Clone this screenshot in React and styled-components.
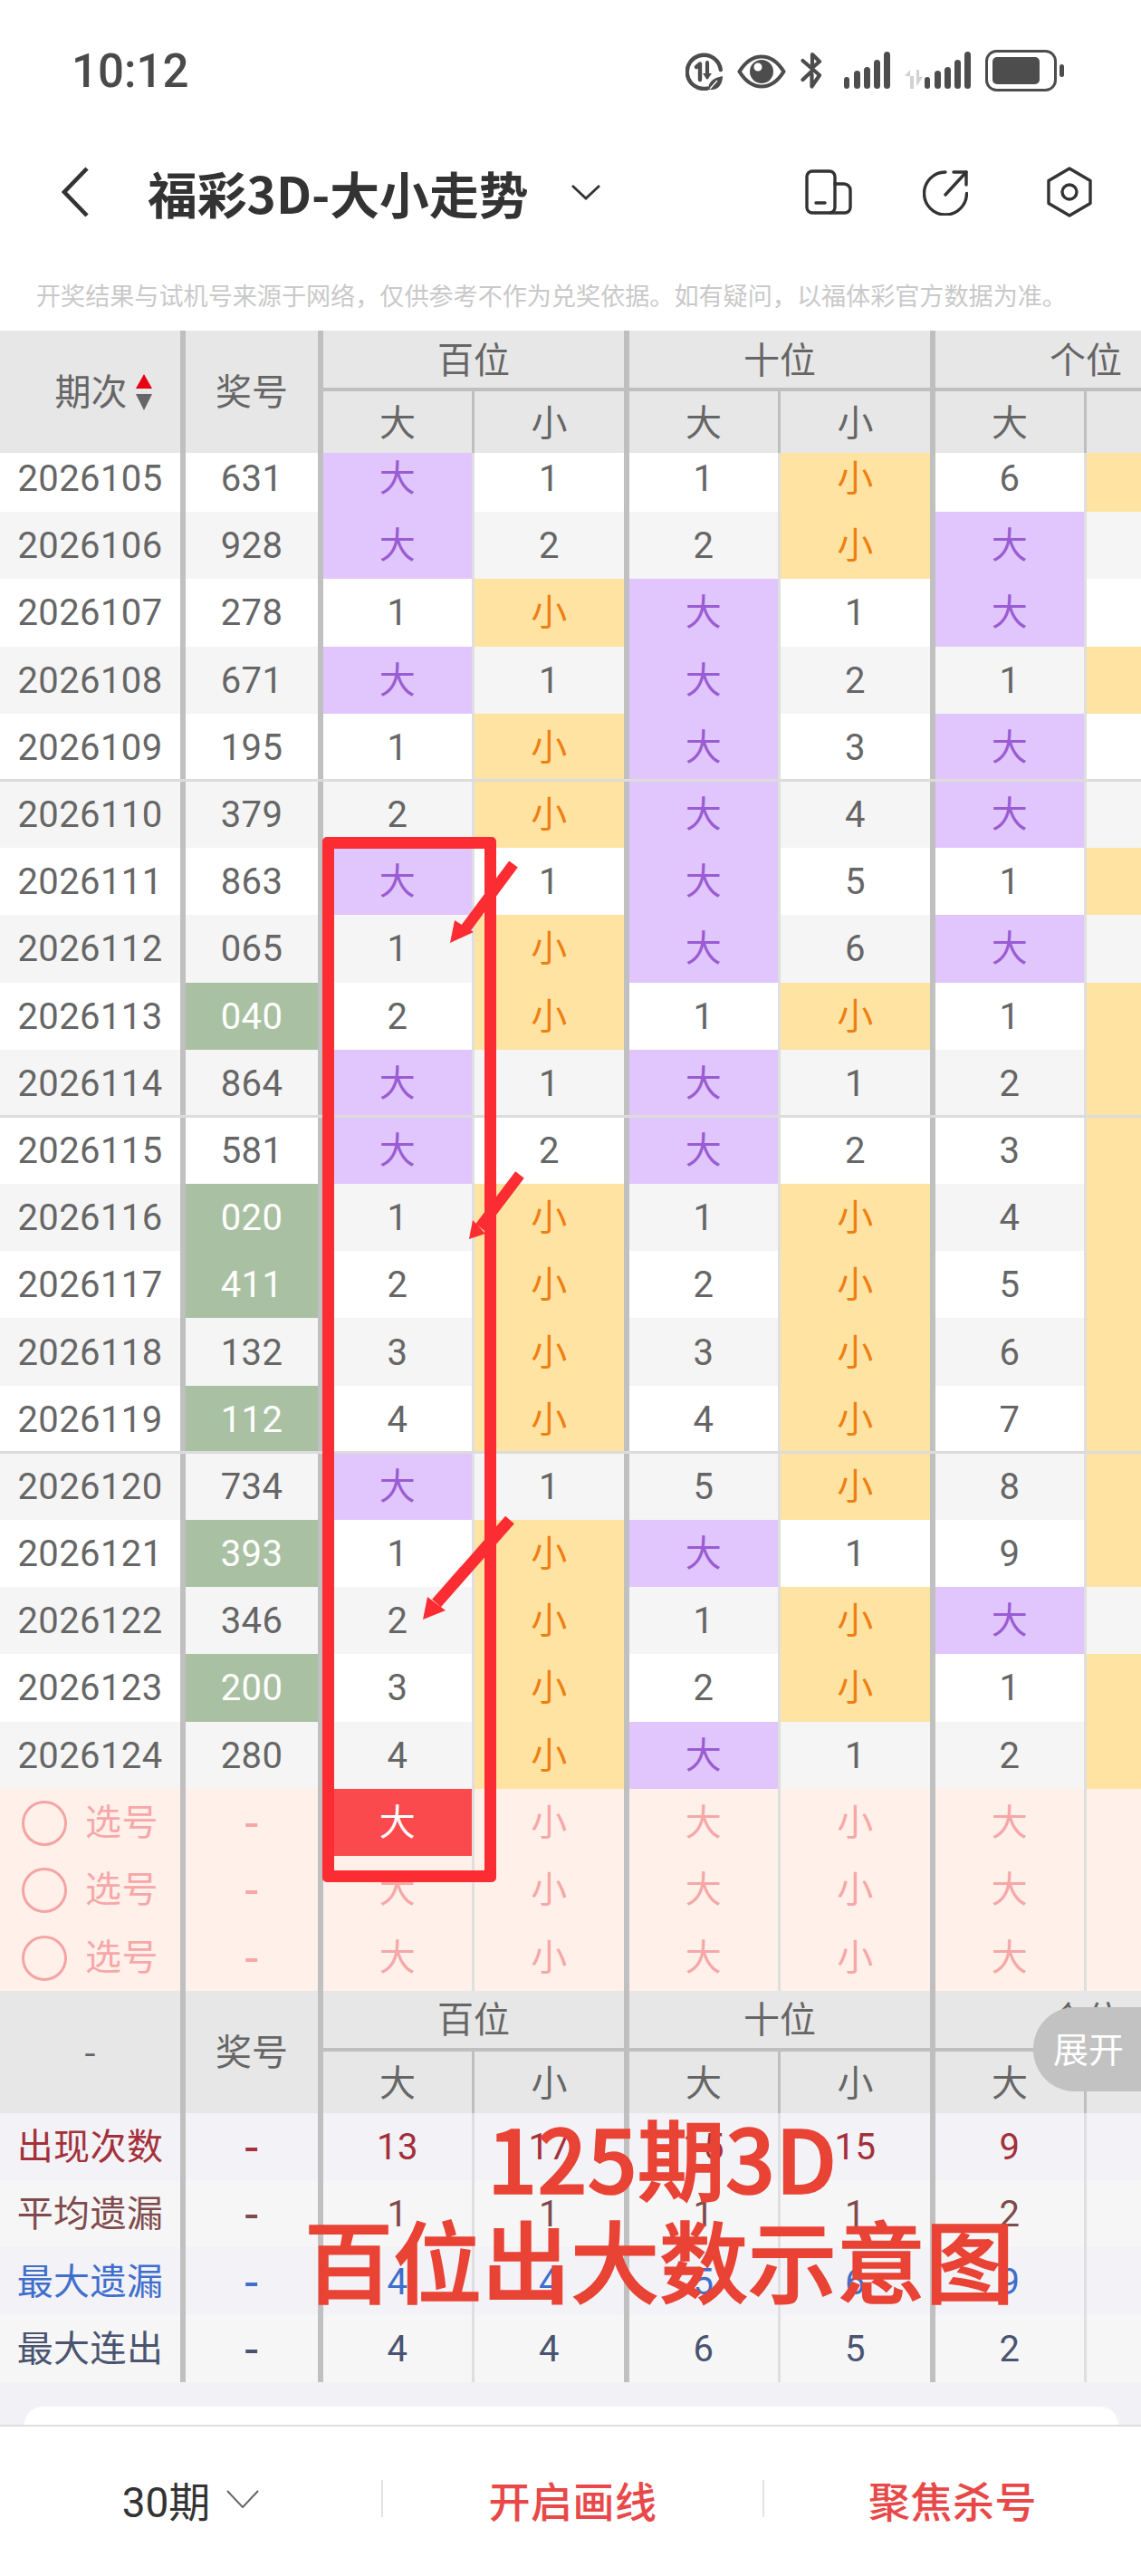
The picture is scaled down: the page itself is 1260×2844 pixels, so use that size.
import React from 'react';
import styled, { createGlobalStyle, css } from 'styled-components';

const Global = createGlobalStyle`
  html, body { margin: 0; padding: 0; background: #fff; }
  * { box-sizing: border-box; }
`;

const FONT = `Roboto, "Noto Sans CJK SC", sans-serif`;
const CJK = `"Noto Sans CJK SC", Roboto, sans-serif`;

const gridColumns = css`
  display: grid;
  grid-template-columns: 205px 152px 167px 171px 167px 171px 167px 171px;
  width: 1371px;
`;

const Page = styled.div`
  position: relative;
  width: 1260px;
  height: 2844px;
  overflow: hidden;
  background: #f2f2f6;
  font-family: ${FONT};
  display: flex;
  flex-direction: column;
`;

const Chrome = styled.header`
  background: #fff;
  height: 365px;
  display: flex;
  flex-direction: column;
  flex: none;
`;

const StatusBar = styled.div`
  height: 152px;
  flex: none;
  display: flex;
  justify-content: space-between;
  align-items: flex-start;
  padding: 56px 85px 0 79px;
`;

const Clock = styled.div`
  font-size: 51px;
  line-height: 46px;
  font-weight: 500;
  color: #4a4a4a;
`;

const StatusIcons = styled.div`
  display: flex;
  align-items: flex-start;
  gap: 16px;
  color: #4d4d4d;
  & > svg:nth-child(3) { margin-right: 7px; }
`;

const NavBar = styled.div`
  height: 120px;
  flex: none;
  display: flex;
  align-items: center;
  padding: 0 54px 0 68px;
`;

const BackIcon = styled.svg`
  width: 30px;
  height: 56px;
  flex: none;
`;

const Title = styled.h1`
  margin: 0 0 0 65px;
  font-family: ${CJK};
  font-size: 54.8px;
  line-height: 60px;
  font-weight: 700;
  color: #333;
  white-space: nowrap;
`;

const TitleCaret = styled.svg`
  width: 34px;
  height: 18px;
  margin-left: 46px;
  flex: none;
`;

const NavActions = styled.div`
  margin-left: auto;
  display: flex;
  align-items: center;
  gap: 78px;
  color: #333;
  & > svg:last-child { margin-left: 9px; }
`;

const Notice = styled.p`
  margin: 0;
  padding: 37px 0 0 40px;
  font-family: ${CJK};
  font-size: 27.1px;
  line-height: 34px;
  color: #c9c9c9;
  white-space: nowrap;
`;

const HeadGrid = styled.div`
  ${gridColumns}
  height: ${p => p.$height}px;
  flex: none;
  background: #e7e7e7;
  grid-template-rows: 67px 1fr;
  color: #666;
  font-family: ${CJK};
  font-size: 40px;
`;

const HeadSpan = styled.div`
  grid-row: 1 / span 2;
  display: flex;
  align-items: center;
  justify-content: center;
  border-right: 6px solid #bfbfbf;
  gap: 8px;
  line-height: 48px;
  padding-left: ${p => (p.$inset ? '30px' : '0')};
  padding-bottom: 5px;
`;

const HeadGroup = styled.div`
  grid-column: span 2;
  display: flex;
  align-items: center;
  justify-content: center;
  border-right: 6px solid #bfbfbf;
  border-bottom: 4px solid #bfbfbf;
  padding-bottom: 4px;
`;

const HeadSub = styled.div`
  display: flex;
  align-items: center;
  justify-content: center;
  border-right: ${p => (p.$thick ? '6px' : '3px')} solid #bfbfbf;
  padding-bottom: 4px;
`;

const SortMark = styled.svg`
  width: 20px;
  height: 40px;
  flex: none;
  margin-top: 5px;
`;

const BodyWindow = styled.div`
  height: 1475px;
  overflow: hidden;
  flex: none;
`;

const BodyInner = styled.div`
  margin-top: -9px;
`;

const Row = styled.div`
  ${gridColumns}
  position: relative;
  height: ${p => p.$height}px;
  flex: none;
  background: ${p => p.$bg};
  ${p => p.$rule && css`
    &::before {
      content: '';
      position: absolute;
      left: 0;
      right: 0;
      top: -2px;
      height: 3px;
      background: #dcdcdc;
    }
  `}
`;

const toneStyles = {
  plain: css`color: #666;`,
  big: css`background-color: #e1c6fd; color: #9a5cd2;`,
  small: css`background-color: #ffe3a2; color: #ee7f13;`,
  win: css`background-color: #a9c1a2; color: #fff;`,
  pick: css`color: #f6a8a8;`,
  picked: css`background-color: #fb4a4e; color: #fff;`,
};

const Cell = styled.div`
  display: flex;
  align-items: center;
  justify-content: center;
  gap: 20px;
  padding-top: 2px;
  font-size: ${p => (p.$dash ? '54px' : '40px')};
  line-height: 48px;
  letter-spacing: 0.4px;
  background-clip: padding-box;
  border-right: ${p => (p.$thick ? '6px solid #c0c0c0' : '3px solid #dfdfdf')};
  ${p => toneStyles[p.$tone || 'plain']}
  ${p => p.$ink && css`color: ${p.$ink};`}
`;

const PickCircle = styled.span`
  width: 50px;
  height: 50px;
  border: 3px solid #f5a4a4;
  border-radius: 50%;
  flex: none;
`;

const Spacer = styled.div`
  height: 27px;
  flex: none;
`;

const Card = styled.div`
  height: 20px;
  flex: none;
  margin: 0 25px 0 27px;
  background: #fff;
  border-radius: 24px 24px 0 0;
`;

const BottomBar = styled.footer`
  flex: 1;
  display: grid;
  grid-template-columns: 421px 421px 418px;
  align-items: center;
  background: #fff;
  border-top: 2px solid #dedede;
  padding-bottom: 5px;
`;

const BarItem = styled.div`
  display: flex;
  align-items: center;
  justify-content: center;
  gap: 18px;
  height: 41px;
  font-family: ${FONT};
  font-size: 46px;
  color: ${p => p.$color};
  font-weight: ${p => p.$weight};
  border-left: ${p => (p.$divided ? '2px solid #e2e2e2' : '0')};
  letter-spacing: ${p => (p.$divided ? '0.5px' : '0')};
`;

const ExpandPill = styled.div`
  position: absolute;
  left: 1141px;
  top: 2216px;
  width: 119px;
  height: 93px;
  display: flex;
  align-items: center;
  padding: 0 0 5px 22px;
  background: #c2c2c2;
  border-radius: 46px 0 0 46px;
  color: #fff;
  font-family: ${CJK};
  font-size: 39px;
  white-space: nowrap;
`;

const RedBox = styled.div`
  position: absolute;
  left: 356px;
  top: 924px;
  width: 192px;
  height: 1154px;
  border: 13px solid #fb2d33;
  border-radius: 5px;
`;

const Scribble = styled.svg`
  position: absolute;
  left: 0;
  top: 0;
  width: 1260px;
  height: 2844px;
  pointer-events: none;
`;

const Caption = styled.div`
  position: absolute;
  left: ${p => p.$left}px;
  top: ${p => p.$top}px;
  color: #e94335;
  font-family: ${CJK};
  font-weight: 500;
  -webkit-text-stroke: 1.6px #e94335;
  font-size: ${p => p.$size}px;
  line-height: 115px;
  white-space: nowrap;
`;

const rows = [
  ['2026105', '631', 0, '大1', '1小', '6小'],
  ['2026106', '928', 0, '大2', '2小', '大1'],
  ['2026107', '278', 0, '1小', '大1', '大2'],
  ['2026108', '671', 0, '大1', '大2', '1小'],
  ['2026109', '195', 0, '1小', '大3', '大1'],
  ['2026110', '379', 0, '2小', '大4', '大2'],
  ['2026111', '863', 0, '大1', '大5', '1小'],
  ['2026112', '065', 0, '1小', '大6', '大1'],
  ['2026113', '040', 1, '2小', '1小', '1小'],
  ['2026114', '864', 0, '大1', '大1', '2小'],
  ['2026115', '581', 0, '大2', '大2', '3小'],
  ['2026116', '020', 1, '1小', '1小', '4小'],
  ['2026117', '411', 1, '2小', '2小', '5小'],
  ['2026118', '132', 0, '3小', '3小', '6小'],
  ['2026119', '112', 1, '4小', '4小', '7小'],
  ['2026120', '734', 0, '大1', '5小', '8小'],
  ['2026121', '393', 1, '1小', '大1', '9小'],
  ['2026122', '346', 0, '2小', '1小', '大1'],
  ['2026123', '200', 1, '3小', '2小', '1小'],
  ['2026124', '280', 0, '4小', '大1', '2小'],
];

const stats = [
  { label: '出现次数', ink: '#a3303a', bg: '#f2f2f7', values: [13, 17, 15, 15, 9, 21] },
  { label: '平均遗漏', ink: '#7f4a4c', bg: '#f6f6f6', values: [1, 1, 1, 1, 2, 1] },
  { label: '最大遗漏', ink: '#3f6fcb', bg: '#f2f2f7', values: [4, 4, 5, 6, 9, 4] },
  { label: '最大连出', ink: '#4a5470', bg: '#f6f6f6', values: [4, 4, 6, 5, 2, 3] },
];

const toneOf = v => (v === '大' ? 'big' : v === '小' ? 'small' : 'plain');

const Pair = ({ value }) => (
  <>
    <Cell $tone={toneOf(value[0])}>{value[0]}</Cell>
    <Cell $tone={toneOf(value[1])} $thick>{value[1]}</Cell>
  </>
);

const HeadRow = ({ first, height, inset }) => (
  <HeadGrid $height={height}>
    <HeadSpan $inset={inset}>{first}</HeadSpan>
    <HeadSpan>奖号</HeadSpan>
    <HeadGroup>百位</HeadGroup>
    <HeadGroup>十位</HeadGroup>
    <HeadGroup>个位</HeadGroup>
    {[0, 1, 2].map(i => (
      <React.Fragment key={i}>
        <HeadSub>大</HeadSub>
        <HeadSub $thick>小</HeadSub>
      </React.Fragment>
    ))}
  </HeadGrid>
);

const SortGlyph = () => (
  <SortMark viewBox="0 0 20 40">
    <path d="M10 0 L19 16 H1 Z" fill="#e60012" />
    <path d="M1 22 H19 L10 40 Z" fill="#666" />
  </SortMark>
);

const EcoIcon = () => (
  <svg width="41" height="42" viewBox="0 0 41 42" fill="none" style={{ marginTop: 2 }}>
    <path d="M24 39.6 A18.6 18.6 0 1 1 38.8 19" stroke="currentColor" strokeWidth="4.4" strokeLinecap="round" />
    <path d="M12 16 L16 12.5 V30" stroke="currentColor" strokeWidth="4.4" strokeLinecap="round" strokeLinejoin="round" />
    <path d="M24 11 V27" stroke="currentColor" strokeWidth="4.2" strokeLinecap="round" />
    <path d="M19 23 H29 L24 30 Z" fill="currentColor" />
    <path d="M25 41 C25 33 30 28 41 26 C41 35 36 41 29 41 Z" fill="currentColor" />
    <path d="M27 40 L35 31" stroke="#fff" strokeWidth="1.4" />
  </svg>
);

const EyeIcon = () => (
  <svg width="54" height="38" viewBox="0 0 54 38" fill="none" style={{ marginTop: 4 }}>
    <path d="M2.5 19 C10 7 18 2.5 27 2.5 C36 2.5 44 7 51.5 19 C44 31 36 35.5 27 35.5 C18 35.5 10 31 2.5 19 Z" stroke="currentColor" strokeWidth="4.2" strokeLinejoin="round" />
    <circle cx="27" cy="19" r="13" fill="currentColor" />
    <circle cx="23" cy="14" r="4.5" fill="#fff" />
  </svg>
);

const BluetoothIcon = () => (
  <svg width="25" height="42" viewBox="0 0 25 42" fill="none" style={{ marginTop: 1 }}>
    <path d="M2.5 10 L21 26 L12.5 38.5 V25 M2.5 31 L13 21 M13 19 V3 L21 11 L14 17" stroke="currentColor" strokeWidth="4.2" strokeLinecap="round" strokeLinejoin="round" />
  </svg>
);

const SIGNAL = [
  [0, 28, 6, 13],
  [11, 21, 7, 20],
  [22, 17, 7, 24],
  [33, 9, 7, 32],
  [44, 0, 7, 41],
];

const SignalIcon = ({ arrows }) => (
  <svg width={arrows ? 73 : 51} height="42" viewBox={`${arrows ? -22 : 0} 0 ${arrows ? 73 : 51} 42`} style={{ marginTop: 1 }}>
    {arrows && (
      <g fill="#d2d2d2">
        <path d="M-22 27 L-16 20 V41 H-12 V27 Z" />
        <path d="M-9 20 H-6 V28 H-2 L-7 36 L-9 38 Z" />
      </g>
    )}
    {SIGNAL.map(([x, y, w, h]) => (
      <rect key={x} x={x} y={y} width={w} height={h} rx={w / 2} fill="currentColor" />
    ))}
  </svg>
);

const BatteryIcon = () => (
  <svg width="87" height="46" viewBox="0 0 87 46" fill="none" style={{ marginTop: -1 }}>
    <rect x="1.5" y="1.5" width="76" height="43" rx="11" stroke="currentColor" strokeWidth="3" />
    <rect x="8" y="8" width="52" height="30" rx="5" fill="currentColor" />
    <rect x="82" y="16" width="5" height="14" rx="2.5" fill="currentColor" />
  </svg>
);

const PhoneIcon = () => (
  <svg width="52" height="50" viewBox="0 0 52 50" fill="none" stroke="currentColor" strokeWidth="3.4" strokeLinecap="round" strokeLinejoin="round">
    <rect x="2" y="2" width="31" height="46" rx="6" />
    <path d="M33 16 H43 A7 7 0 0 1 50 23 V42 A6 6 0 0 1 44 48 H28" />
    <path d="M12 37 H22" />
  </svg>
);

const ShareIcon = () => (
  <svg width="50" height="51" viewBox="0 0 50 51" fill="none" stroke="currentColor" strokeWidth="3.4" strokeLinecap="round" strokeLinejoin="round">
    <path d="M25 3 A23.5 23.5 0 1 0 48.5 26.5" />
    <path d="M34 3 H48 V17" />
    <path d="M48 3 L25 28" />
  </svg>
);

const HexIcon = () => (
  <svg width="50" height="56" viewBox="0 0 50 56" fill="none" stroke="currentColor" strokeWidth="3.4" strokeLinejoin="round">
    <path d="M25 2 L48 15.5 V40.5 L25 54 L2 40.5 V15.5 Z" />
    <circle cx="25" cy="28" r="8" />
  </svg>
);

const arrowShaft = { stroke: '#fb2d33', fill: 'none' };

export default function App() {
  return (
    <Page>
      <Global />
      <Chrome>
        <StatusBar>
          <Clock>10:12</Clock>
          <StatusIcons>
            <EcoIcon />
            <EyeIcon />
            <BluetoothIcon />
            <SignalIcon />
            <SignalIcon arrows />
            <BatteryIcon />
          </StatusIcons>
        </StatusBar>
        <NavBar>
          <BackIcon viewBox="0 0 30 56" fill="none">
            <path d="M28 2 L3 28 L28 54" stroke="#333" strokeWidth="4.6" />
          </BackIcon>
          <Title>福彩3D-大小走势</Title>
          <TitleCaret viewBox="0 0 34 18" fill="none">
            <path d="M2 2 L17 16 L32 2" stroke="#333" strokeWidth="2.8" />
          </TitleCaret>
          <NavActions>
            <PhoneIcon />
            <ShareIcon />
            <HexIcon />
          </NavActions>
        </NavBar>
        <Notice>开奖结果与试机号来源于网络，仅供参考不作为兑奖依据。如有疑问，以福体彩官方数据为准。</Notice>
      </Chrome>

      <HeadRow height={135} inset first={<><span>期次</span><SortGlyph /></>} />

      <BodyWindow>
        <BodyInner>
          {rows.map(([period, num, win, h, t, u], i) => (
            <Row key={period} $height={74.2} $bg={i % 2 ? '#f5f5f5' : '#fff'} $rule={i % 5 === 0 && i > 0}>
              <Cell $thick>{period}</Cell>
              <Cell $thick $tone={win ? 'win' : 'plain'}>{num}</Cell>
              <Pair value={h} />
              <Pair value={t} />
              <Pair value={u} />
            </Row>
          ))}
        </BodyInner>
      </BodyWindow>

      {[0, 1, 2].map(i => (
        <Row key={i} $height={74.33} $bg="#fff0ea">
          <Cell $thick $tone="pick"><PickCircle />选号</Cell>
          <Cell $thick $tone="pick" $dash>-</Cell>
          <Cell $tone={i === 0 ? 'picked' : 'pick'}>大</Cell>
          <Cell $thick $tone="pick">小</Cell>
          <Cell $tone="pick">大</Cell>
          <Cell $thick $tone="pick">小</Cell>
          <Cell $tone="pick">大</Cell>
          <Cell $thick $tone="pick">小</Cell>
        </Row>
      ))}

      <HeadRow height={135} first="-" />

      {stats.map(s => (
        <Row key={s.label} $height={74.25} $bg={s.bg}>
          <Cell $thick $ink={s.ink}>{s.label}</Cell>
          <Cell $thick $ink={s.ink} $dash>-</Cell>
          {s.values.map((v, i) => (
            <Cell key={i} $thick={i % 2 === 1} $ink={s.ink}>{v}</Cell>
          ))}
        </Row>
      ))}

      <Spacer />
      <Card />
      <BottomBar>
        <BarItem $color="#333" $weight={400}>
          <span>30期</span>
          <svg width="36" height="20" viewBox="0 0 36 20" fill="none">
            <path d="M1 1 L18 19 L35 1" stroke="#666" strokeWidth="2" />
          </svg>
        </BarItem>
        <BarItem $color="#e84848" $weight={500} $divided>开启画线</BarItem>
        <BarItem $color="#e84848" $weight={500} $divided>聚焦杀号</BarItem>
      </BottomBar>

      <ExpandPill>展开</ExpandPill>
      <RedBox />
      <Scribble viewBox="0 0 1260 2844">
        <path d="M567 954 L512 1028" {...arrowShaft} strokeWidth="12" />
        <path d="M497 1041 L502 1016 L523 1029 Z" fill="#fb2d33" />
        <path d="M574 1297 L530 1355" {...arrowShaft} strokeWidth="12" />
        <path d="M518 1368 L522 1347 L536 1362 Z" fill="#fb2d33" />
        <path d="M563 1678 L482 1770" {...arrowShaft} strokeWidth="13" />
        <path d="M467 1788 L472 1763 L492 1778 Z" fill="#fb2d33" />
      </Scribble>
      <Caption $left={538} $top={2322} $size={97}>125期3D</Caption>
      <Caption $left={336} $top={2435} $size={98}>百位出大数示意图</Caption>
    </Page>
  );
}
